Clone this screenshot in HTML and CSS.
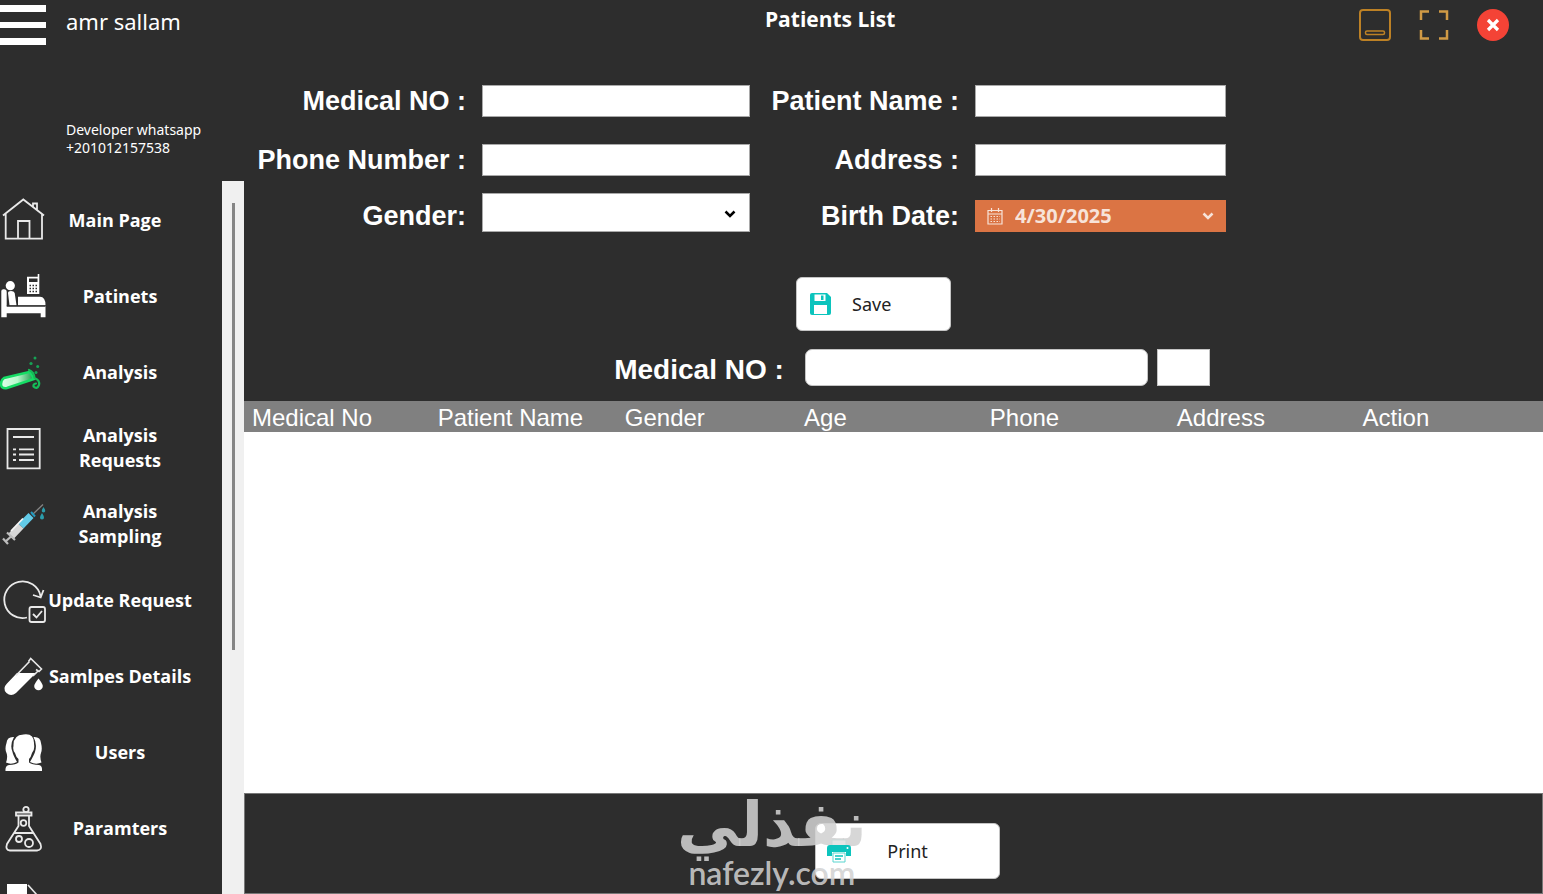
FILE: index.html
```html
<!DOCTYPE html>
<html lang="en">
<head>
<meta charset="utf-8">
<title>Patients List</title>
<link rel="stylesheet" href="styles.css">
</head>
<body>
<div class="app">
  <aside class="sidebar">
    <div class="profile">
      <button class="menu-toggle" type="button" aria-label="Menu"><span></span><span></span><span></span></button>
      <div class="profile-text">
        <p class="user-name">amr sallam</p>
        <p class="developer">Developer whatsapp<br>+201012157538</p>
      </div>
    </div>
    <div class="nav-area">
      <nav class="nav">
        <a class="nav-item home" href="#main">
          <svg class="nav-icon line" viewBox="0 0 48 48"><path d="M3 19.500 23.300 3.500 44 19.500M5.700 17.500V42.700H42V17.500M18 42.700V25H29.500V42.700M33 11V7.500H37V14.500"/></svg>
          <span>Main Page</span></a>
        <a class="nav-item" href="#patients">
          <svg class="nav-icon solid" viewBox="0 0 48 48"><circle cx="10.300" cy="13.700" r="4.600"/><path d="M1.300 19Q1.300 17 4 17.300Q6.700 17.500 6.700 20V34H45.500V45.300H40.700V41.300H6.700V45.300H1.300ZM8 21Q8 19 11 19Q14 19 14.700 21L16.500 33.300H9.500ZM18 24.700H40Q45.500 24.700 45.500 33.300H18Z"/><path d="M27 4.700H37.700V2H39.300V22H27Z"/><path class="cut" d="M29 6.500H37.500V10H29ZM6.700 33.500H45.500V34.700H6.700Z"/><path class="keys" d="M29.500 13.500H37M29.500 16.500H37M29.500 19.500H37"/></svg>
          <span>Patinets</span></a>
        <a class="nav-item" href="#analysis">
          <svg class="nav-icon" viewBox="0 0 48 48"><defs><linearGradient id="tube" x1="0" x2="1"><stop offset="0" stop-color="#e0ffe9"/><stop offset=".5" stop-color="#b5f7ca"/><stop offset="1" stop-color="#1b9a4b"/></linearGradient></defs><path d="M4 30 29 24Q31 25 34 31L7 40Q1 41 1 36Q1 32 4 30Z" fill="url(#tube)" stroke="#16dc65" stroke-width="2.500"/><path d="M29 22Q34 24 34.500 30M34.500 30Q40 32 39 37Q37 42 33.500 38.500Q33 36 36 35.500" fill="none" stroke="#15bc58" stroke-width="2.200" stroke-linecap="round"/><g fill="#16a355"><circle cx="35" cy="10" r="1.500"/><circle cx="31" cy="15.500" r="1.600"/><circle cx="37.700" cy="18.500" r="1.500"/><circle cx="36" cy="24.500" r="1.500"/></g></svg>
          <span>Analysis</span></a>
        <a class="nav-item" href="#requests">
          <svg class="nav-icon line" viewBox="0 0 48 48"><path d="M7.500 5H39.700V44.300H7.500ZM13 13H34M13 25.300H16M19 25.300H34M13 30.500H16M19 30.500H34M13 36H16M19 36H34"/></svg>
          <span>Analysis Requests</span></a>
        <a class="nav-item" href="#sampling">
          <svg class="nav-icon" viewBox="0 0 48 48"><path d="M32 15 43 4.500" stroke="#858585" stroke-width="1.300"/><path d="M28.500 13 33.500 18 23.500 28.500 18 23.500Z" fill="#62cbe8"/><path d="M31 12 35 16.500" stroke="#239bc1" stroke-width="2"/><path d="M18 23.500 23.500 28.500 14 38.500 8.500 33.500Z" fill="#d7d7d7"/><path d="M23 18.500 11 31" stroke="#f5f5f5" stroke-width="1.800"/><path d="M7 32.500 15 40M10.500 37 5.500 41.500M3 38.500 8 44" stroke="#bdbdbd" stroke-width="2.200"/><path d="M43.500 7Q47 12 43.500 12.500Q40 12 43.500 7ZM42 13Q46 19 42 19.500Q38 19 42 13Z" fill="#2b9dac"/></svg>
          <span>Analysis Sampling</span></a>
        <a class="nav-item wide" href="#update">
          <svg class="nav-icon line" viewBox="0 0 48 48"><path d="M27 41.500A18.300 18.300 0 1 1 40.500 20M33 19 40.700 21.500 43.500 14"/><rect x="29.500" y="31" width="15.500" height="15" rx="2"/><path d="M33 38 36.500 41.500 42 35"/></svg>
          <span>Update Request</span></a>
        <a class="nav-item wide" href="#samples">
          <svg class="nav-icon solid" viewBox="0 0 48 48"><path d="M17 21H36L16 41Q11 45 6.500 41Q2 36.500 7 31.500Z"/><path class="stroke" d="M29.500 9.500 16 23.500M38.500 18.500 33 24M28.500 9.500 30.700 6.500 41.500 17 39 19.500 36 17.500"/><path d="M38.500 26.500Q42.800 32 42.800 34A4.300 4.300 0 0 1 34.200 34Q34.200 32 38.500 26.500Z"/></svg>
          <span>Samlpes Details</span></a>
        <a class="nav-item" href="#users">
          <svg class="nav-icon solid" viewBox="0 0 48 48"><path d="M14 9Q7 8.500 6.500 15Q4.500 21 6.500 25Q8 29 6 34.500Q11 37 17 34Q13 27 12.500 24Q9.500 17 14 9ZM33.500 9Q40.500 8.500 41 15Q42.500 21 41 25Q39.500 29 41.500 34.500Q36 37 30 34Q34 27 35 24Q37.500 16 33.500 9Z"/><path d="M23.500 6.500Q34.500 5 34 16Q35 22 32 25Q31 29 29 31V34.500Q32 36.500 39 37Q42.500 37.500 42 43H5.500Q5 37.500 9 37Q16 36.500 18.500 34.500V31Q16 29 15 25Q12.500 22 13.500 18Q13 7 23.500 6.500Z"/></svg>
          <span>Users</span></a>
        <a class="nav-item" href="#parameters">
          <svg class="nav-icon line" viewBox="0 0 48 48"><path d="M16 8.500H31.500V11.500H16ZM18.500 12V22L7 40Q5 46 10 46.500H37Q42.500 46 40.500 40L29 22V12M13.500 29H34"/><circle cx="26" cy="5.500" r="2.700"/><circle cx="23.500" cy="19" r="2.800"/><circle cx="19" cy="35" r="3"/><circle cx="29" cy="39" r="4"/></svg>
          <span>Paramters</span></a>
        <a class="nav-item" href="#reports" aria-label="Reports">
          <svg class="nav-icon solid" viewBox="0 0 48 48"><path d="M7 4H27V16H37V44H7Z"/><path class="stroke" d="M28 5 37 15"/></svg>
        </a>
      </nav>
      <div class="scrollbar"><div class="scroll-thumb"></div></div>
    </div>
  </aside>

  <main class="content">
    <header class="titlebar">
      <h1>Patients List</h1>
      <div class="window-controls">
        <button type="button" aria-label="Minimize"><svg viewBox="0 0 32 32"><rect x="1" y="1" width="30" height="30" rx="3" fill="none" stroke="#bd8125" stroke-width="2"/><rect x="6.500" y="22" width="19" height="3.500" rx="1.500" fill="none" stroke="#bd8125" stroke-width="1.500"/></svg></button>
        <button type="button" aria-label="Maximize"><svg viewBox="0 0 32 32"><path d="M11 2.500H3V11M21 2.500H29V11M3 21V29.500H11M29 21V29.500H21" fill="none" stroke="#d09a45" stroke-width="2.500"/></svg></button>
        <button type="button" aria-label="Close"><svg viewBox="0 0 32 32"><circle cx="16" cy="16" r="16" fill="#f44336"/><path d="M11 11 21 21M21 11 11 21" stroke="#fff" stroke-width="3.200"/></svg></button>
      </div>
    </header>

    <form class="patient-form">
      <label for="medical-no">Medical NO :</label><input id="medical-no" type="text">
      <label for="patient-name">Patient Name :</label><input id="patient-name" type="text">
      <label for="phone">Phone Number :</label><input id="phone" type="text">
      <label for="address">Address :</label><input id="address" type="text">
      <label for="gender" class="low">Gender:</label>
      <div class="select-box"><select id="gender"><option></option><option>Male</option><option>Female</option></select><svg class="chevron" viewBox="0 0 12 8"><path d="M1.500 1.500 6 6 10.500 1.500"/></svg></div>
      <label for="birth-date" class="low">Birth Date:</label>
      <div class="date-box">
        <svg class="calendar" viewBox="0 0 16 17"><path d="M1 2.500H15V16H1ZM1 6H15M4.500 0V4M11.500 0V4"/><path d="M3.500 8.500H13M3.500 11H13M3.500 13.500H13" stroke-dasharray="1.500 1.500"/></svg>
        <input id="birth-date" type="text" value="4/30/2025">
        <button type="button" aria-label="Open calendar"><svg class="chevron" viewBox="0 0 12 8"><path d="M1.500 1.500 6 6 10.500 1.500"/></svg></button>
      </div>
    </form>

    <div class="save-row">
      <button class="action save" type="button"><svg viewBox="0 0 22 24"><path fill="#0cc4bd" d="M2 1H17L21 5V21Q21 23 19 23H2Q0 23 0 21V3Q0 1 2 1Z"/><path fill="#fff" d="M4.500 2.500H15.500V9H4.500ZM4 13H17V22H4Z"/><path fill="#0cc4bd" d="M11 3.500H13.500V8H11Z"/></svg><span>Save</span></button>
    </div>

    <div class="search-row">
      <label for="search">Medical NO :</label>
      <input id="search" type="text">
      <button type="button" aria-label="Search"></button>
    </div>

    <div class="table-area">
      <table>
        <colgroup><col class="c-medium"><col class="c-wide"><col class="c-narrow"><col class="c-medium"><col class="c-wide"><col class="c-medium"><col></colgroup>
        <thead><tr><th>Medical No</th><th>Patient Name</th><th>Gender</th><th>Age</th><th>Phone</th><th>Address</th><th>Action</th></tr></thead>
        <tbody></tbody>
      </table>
    </div>

    <footer class="footer">
      <button class="action print" type="button"><svg viewBox="0 0 24 24"><path fill="#e4e4e4" stroke="#c9d9d8" d="M5 1H19V7H5Z"/><path fill="#0cc4bd" d="M3 6H21Q24 6 24 9V17H19V13H5V17H0V9Q0 6 3 6Z"/><circle cx="20.500" cy="9" r="1" fill="#fff"/><path fill="#fff" stroke="#5ad5cf" d="M6 14H18V23H6Z"/><path stroke="#0cc4bd" stroke-width="1.500" d="M8 17H16M8 20H14"/></svg><span>Print</span></button>
    </footer>
  </main>

  <div class="watermark"><span class="mark-ar" lang="ar" dir="rtl">نفذلي</span><span class="mark-en">nafezly.com</span></div>
</div>
</body>
</html>
```
FILE: styles.css
```css
* { box-sizing: border-box; }
body { margin: 0; background: #2d2d2d; color: #fff; font-family: "Noto Sans", "Open Sans", sans-serif; }
h1, p { margin: 0; }
button, input, select { font: inherit; border-radius: 0; min-width: 0; }
button { padding: 0; cursor: pointer; }
svg { display: block; flex: none; }

.app { position: relative; display: flex; height: 100vh; overflow: hidden; }
.sidebar { flex: none; width: 244px; display: flex; flex-direction: column; }
.profile { flex: none; height: 181px; display: flex; gap: 20px; }
.menu-toggle { width: 46px; height: 50px; padding: 5px 0; background: none; border: 0; display: flex; flex-direction: column; gap: 10px; }
.menu-toggle span { width: 100%; height: 7px; background: #fff; }
.profile-text { padding-top: 5px; }
.user-name { font-size: 22px; line-height: 32px; }
.developer { margin-top: 84px; font-size: 14px; line-height: 18px; white-space: nowrap; }

.nav-area { flex: 1; min-height: 0; display: flex; overflow: hidden; }
.nav { flex: 1; padding-top: 1px; }
.nav-item { display: flex; align-items: center; height: 76px; color: #fff; text-decoration: none; font-size: 18px; line-height: 25px; font-family: "Open Sans", sans-serif; font-weight: 700; }
.nav-item span { width: 144px; text-align: center; padding: 0 20px; }
.nav-item.wide span { padding: 0; white-space: nowrap; }
.nav-item.home span { padding: 0 30px 0 20px; white-space: nowrap; }
.nav-icon { width: 48px; height: 48px; }
.line { fill: none; stroke: #e9e9e9; stroke-width: 1.8; }
.solid { fill: #fff; }
.solid .cut { fill: #2d2d2d; }
.solid .keys { stroke: #2d2d2d; stroke-width: 1.5; stroke-dasharray: 1.5 1.5; }
.solid .stroke { fill: none; stroke: #e9e9e9; stroke-width: 1.6; }
.scrollbar { width: 22px; background: #f0f0f0; padding: 22px 0 0 10px; }
.scroll-thumb { width: 3px; height: 447px; background: #858585; }

.content { flex: 1; min-width: 0; display: flex; flex-direction: column; }
.titlebar { height: 85px; display: flex; justify-content: space-between; align-items: flex-start; padding: 4px 34px 0 40.1%; }
.titlebar h1 { font-size: 21px; line-height: 30px; font-weight: 700; font-family: "Open Sans", sans-serif; white-space: nowrap; }
.window-controls { display: flex; gap: 27px; padding-top: 5px; }
.window-controls button { width: 32px; height: 32px; border: 0; background: none; }

.patient-form { display: grid; grid-template-columns: 222px minmax(0, 268fr) 193px minmax(0, 251fr); grid-template-rows: 59px 49px 39px; column-gap: 16px; align-items: start; padding-right: 24.4%; font-family: "Liberation Sans", Arial, sans-serif; }
.patient-form label, .search-row label { font-size: 27px; line-height: 32px; font-weight: 700; text-align: right; white-space: nowrap; }
.patient-form .low { align-self: end; }
.patient-form > input { width: 100%; height: 32px; border: 1px solid #a9a9a9; background: #fff; }
.select-box { position: relative; height: 39px; }
.select-box select { width: 100%; height: 100%; border: 1px solid #a9a9a9; background: #fff; appearance: none; }
.chevron { width: 12px; height: 8px; fill: none; stroke: currentColor; stroke-width: 2.5; }
.select-box .chevron { position: absolute; right: 14px; top: 17px; color: #000; pointer-events: none; }
.date-box { align-self: end; height: 32px; display: flex; align-items: center; gap: 12px; padding: 0 12px; background: #db7444; color: #f7e3d9; }
.calendar { width: 16px; height: 17px; fill: none; stroke: #f7e3d9; stroke-width: 1.2; }
.date-box input { flex: 1; padding: 0; border: 0; background: none; color: inherit; font: 700 20px/30px "Noto Sans", sans-serif; }
.date-box button { background: none; border: 0; color: inherit; }

.action { display: flex; align-items: center; border: 1px solid #c4c4c4; border-radius: 6px; background: #fff; color: #222; font-size: 18px; }
.save-row { padding: 45px 0 18px 42.5%; }
.save { width: 155px; height: 54px; padding-left: 13px; gap: 20px; }
.save svg { width: 22px; height: 24px; }
.search-row { display: flex; align-items: center; padding-left: 28.5%; font-family: "Liberation Sans", Arial, sans-serif; }
.search-row label { padding-top: 4px; font-size: 28px; }
.search-row input { width: 343px; height: 37px; margin-left: 21px; border: 1px solid #c4c4c4; border-radius: 7px; background: #fff; }
.search-row button { width: 53px; height: 37px; margin-left: 9px; border: 1px solid #c4c4c4; background: #fff; }

.table-area { flex: 1; margin-top: 15px; background: #fff; min-height: 0; }
table { width: 100%; border-collapse: collapse; table-layout: fixed; font-family: "Liberation Sans", Arial, sans-serif; }
th { height: 31px; padding: 2px 0 0 8px; background: #808080; font-size: 24px; line-height: 28px; font-weight: 400; text-align: left; }
.c-medium { width: 14.3%; }
.c-wide { width: 14.4%; }
.c-narrow { width: 13.8%; }
.footer { flex: none; height: 101px; border: 1px solid #777; padding: 29px 0 0 43.9%; }
.print { width: 185px; height: 56px; padding-left: 11px; gap: 36px; }
.print svg { position: relative; z-index: 2; width: 24px; height: 24px; }

.watermark { position: absolute; z-index: 1; left: 44%; bottom: 0; width: 186px; height: 100px; display: flex; flex-direction: column; align-items: center; color: rgba(209, 209, 209, .87); pointer-events: none; }
.mark-ar { font: 700 62px/62px "DejaVu Sans", sans-serif; white-space: nowrap; }
.mark-en { font: 600 32px/34px Lato, sans-serif; }
```
